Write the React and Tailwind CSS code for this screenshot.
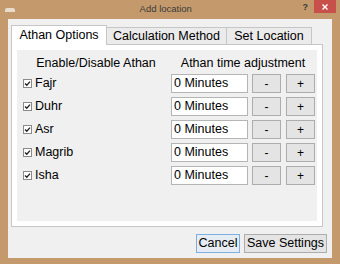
import { useState } from 'react';

const prayers = ['Fajr', 'Duhr', 'Asr', 'Magrib', 'Isha'];

function Check() {
  return (
    <span className="w-[9px] h-[9px] border border-[#8a8a8a] bg-white flex items-center justify-center shrink-0">
      <svg width="7" height="7" viewBox="0 0 7 7">
        <path d="M1 3.5 L2.8 5.3 L6 1.6" fill="none" stroke="#222" strokeWidth="1.3" />
      </svg>
    </span>
  );
}

function SmallButton({ children }) {
  return (
    <button className="w-[29px] h-[19px] border border-[#adadad] bg-[#e4e4e4] flex items-center justify-center text-[12px] leading-none text-black">
      {children}
    </button>
  );
}

export default function App() {
  const [tab, setTab] = useState(0);
  const tabs = [
    { label: 'Athan Options', w: 'w-[96px]' },
    { label: 'Calculation Method', w: 'w-[121px]' },
    { label: 'Set Location', w: 'w-[86px]' },
  ];

  return (
    <div
      className="w-[340px] h-[264px] bg-[#c49a6c] flex flex-col overflow-hidden"
      style={{ fontFamily: '"Liberation Sans", Arial, sans-serif' }}
    >
      {/* title bar */}
      <div className="h-[19px] flex items-start shrink-0">
        <div className="w-[10px] h-[8px] mt-[4px] ml-[5px] flex flex-col justify-end">
          <div className="h-[4px] w-[10px] bg-[#e8dccd] rounded-t-[2px]" />
        </div>
        <div className="flex-1 text-center text-[9.5px] leading-[19px] text-[#3a3a3a] -mt-[1px] pl-[14px]">Add location</div>
        <div className="text-[9px] font-bold text-[#3a3a3a] leading-[14px] mr-[6px]">?</div>
        <div className="w-[22px] h-[13px] bg-[#c7504b] flex items-center justify-center mr-[4px]">
          <svg width="6" height="6" viewBox="0 0 6 6">
            <path d="M0.5 0.5 L5.5 5.5 M5.5 0.5 L0.5 5.5" stroke="#fff" strokeWidth="1.4" />
          </svg>
        </div>
      </div>

      {/* client area */}
      <div className="flex-1 mx-[8px] mb-[6px] bg-[#f0f0f0] flex flex-col pt-[6px] pl-[3px] pr-[5px]">
        <div className="flex items-end h-[19px] mr-[4px]">
          {tabs.map((t, i) => (
            <button
              key={t.label}
              onClick={() => setTab(i)}
              className={
                i === tab
                  ? `${t.w} h-[20px] -mb-px z-10 bg-white border border-b-0 border-[#c6c6c6] text-[12.5px] text-black leading-[17px]`
                  : `${t.w} h-[17px] bg-[#ebebeb] border border-b-0 border-[#c6c6c6] text-[12.5px] text-black leading-[15px] -ml-px`
              }
            >
              {t.label}
            </button>
          ))}
        </div>

        <div className="h-[183px] mr-[4px] border border-[#c6c6c6] bg-white p-[5px]">
          <div className="h-full bg-[#f0f0f0] flex text-[12.5px] text-black">
            <div className="w-[154px] flex flex-col pl-[6px]">
              <div className="h-[15px] leading-[15px] mt-[6px] mb-[3px] text-center pr-[2px]">Enable/Disable Athan</div>
              <div className="flex flex-col gap-[4px]">
                {prayers.map((p) => (
                  <div key={p} className="h-[19px] flex items-center gap-[3px]">
                    <Check />
                    <span className="leading-none">{p}</span>
                  </div>
                ))}
              </div>
            </div>
            <div className="w-[144px] flex flex-col">
              <div className="h-[15px] leading-[15px] mt-[6px] mb-[3px] text-center">Athan time adjustment</div>
              <div className="flex flex-col gap-[4px]">
                {prayers.map((p) => (
                  <div key={p} className="h-[19px] flex items-center">
                    <div className="w-[77px] h-[19px] border border-[#b5b5b5] bg-white pl-[2px] leading-[17px]">0 Minutes</div>
                    <div className="ml-[4px]">
                      <SmallButton>-</SmallButton>
                    </div>
                    <div className="ml-[5px]">
                      <SmallButton>+</SmallButton>
                    </div>
                  </div>
                ))}
              </div>
            </div>
          </div>
        </div>

        <div className="flex justify-end gap-[4px] mt-[7px]">
          <button className="w-[44px] h-[19px] border border-[#7db0e0] bg-[#e6ecf2] text-[12.5px] leading-[17px] text-black">Cancel</button>
          <button className="w-[83px] h-[19px] border border-[#adadad] bg-[#e4e4e4] text-[12.5px] leading-[17px] text-black">Save Settings</button>
        </div>
      </div>
    </div>
  );
}
